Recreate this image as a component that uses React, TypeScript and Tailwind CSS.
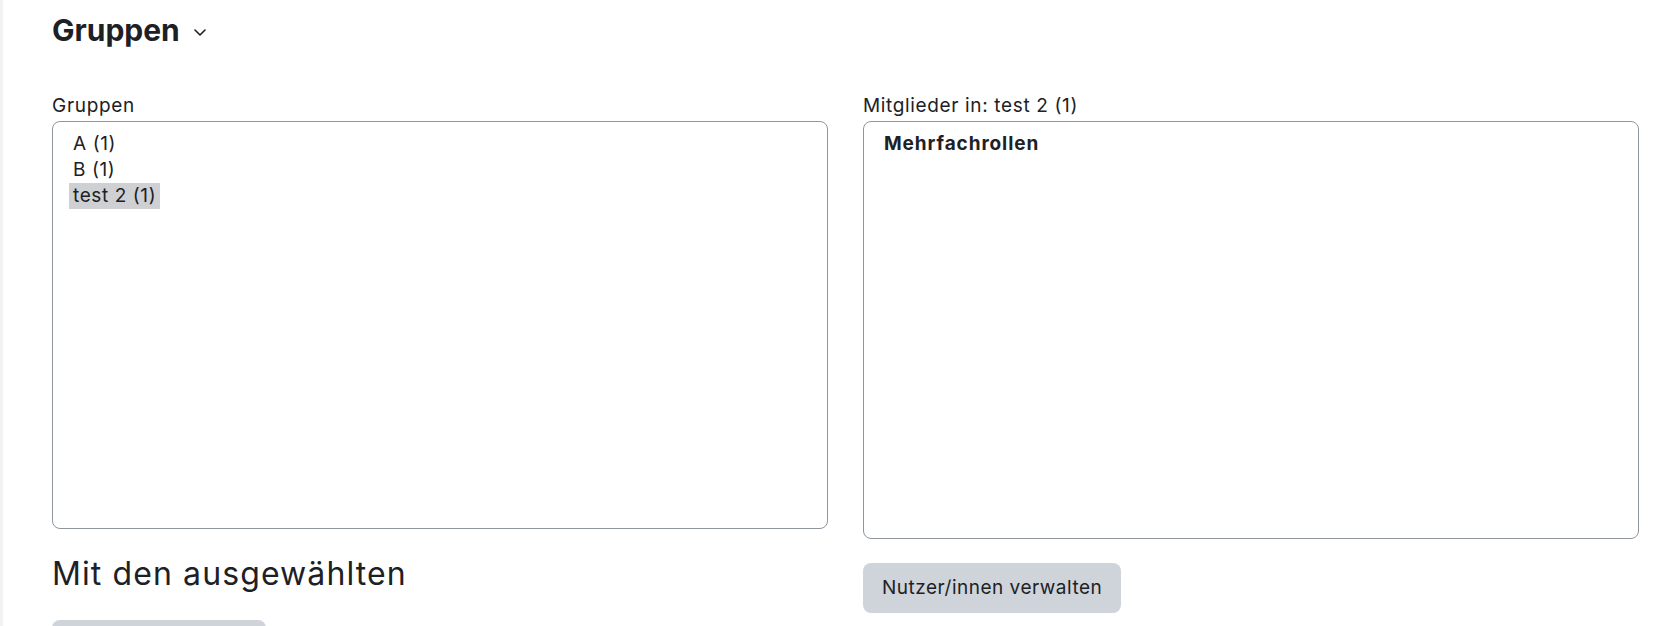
import React from 'react';

const font = { fontFamily: 'Inter, "Liberation Sans", sans-serif' };

function Chevron() {
  return (
    <svg width="12" height="7" viewBox="0 0 12 7" className="ml-[14px] mt-[5px]">
      <path d="M1 1l5 5 5-5" fill="none" stroke="#1d2125" strokeWidth="1.6" strokeLinecap="round" strokeLinejoin="round" />
    </svg>
  );
}

const groups = ['A (1)', 'B (1)', 'test 2 (1)'];

export default function App() {
  return (
    <div className="flex min-h-screen bg-white text-[#1d2125]" style={font}>
      <div className="w-[3px] shrink-0 bg-[#f2f2f2]" />
      <div className="flex-1 pl-[49px] pr-[41px] pt-[12px]">
        <h3 className="flex items-center text-[30px] font-bold leading-[36px]">
          Gruppen
          <Chevron />
        </h3>

        <div className="mt-[44px] grid grid-cols-2 gap-[35px]">
          <div>
            <label className="mb-px block text-[19px] leading-[28px] tracking-[0.7px]">Gruppen</label>
            <div className="h-[408px] rounded-lg border border-[#8f959e] pl-4 pt-[9px] text-[19px] leading-[26px] tracking-[0.6px]">
              {groups.map((g, i) => (
                <div key={g}>
                  <span className={i === 2 ? 'inline-block bg-[#ced0d3] px-1' : 'inline-block px-1'}>{g}</span>
                </div>
              ))}
            </div>
            <h3 className="mt-[27px] text-[32px] leading-[36px] tracking-[1.1px]">Mit den ausgewählten</h3>
            <button className="mt-[28px] h-[50px] w-[214px] rounded-lg bg-[#ced4da] text-[19px] tracking-[0.5px]">
              Gruppen anzeigen
            </button>
          </div>

          <div>
            <label className="mb-px block text-[19px] leading-[28px] tracking-[0.65px]">Mitglieder in: test 2 (1)</label>
            <div className="h-[418px] rounded-lg border border-[#8f959e] pl-4 pt-[9px] text-[19px] leading-[26px]">
              <span className="inline-block px-1 font-bold tracking-[0.9px]">Mehrfachrollen</span>
            </div>
            <button className="mt-[24px] h-[50px] rounded-lg bg-[#ced4da] px-[19px] text-[19px] tracking-[0.5px]">
              Nutzer/innen verwalten
            </button>
          </div>
        </div>
      </div>
    </div>
  );
}
